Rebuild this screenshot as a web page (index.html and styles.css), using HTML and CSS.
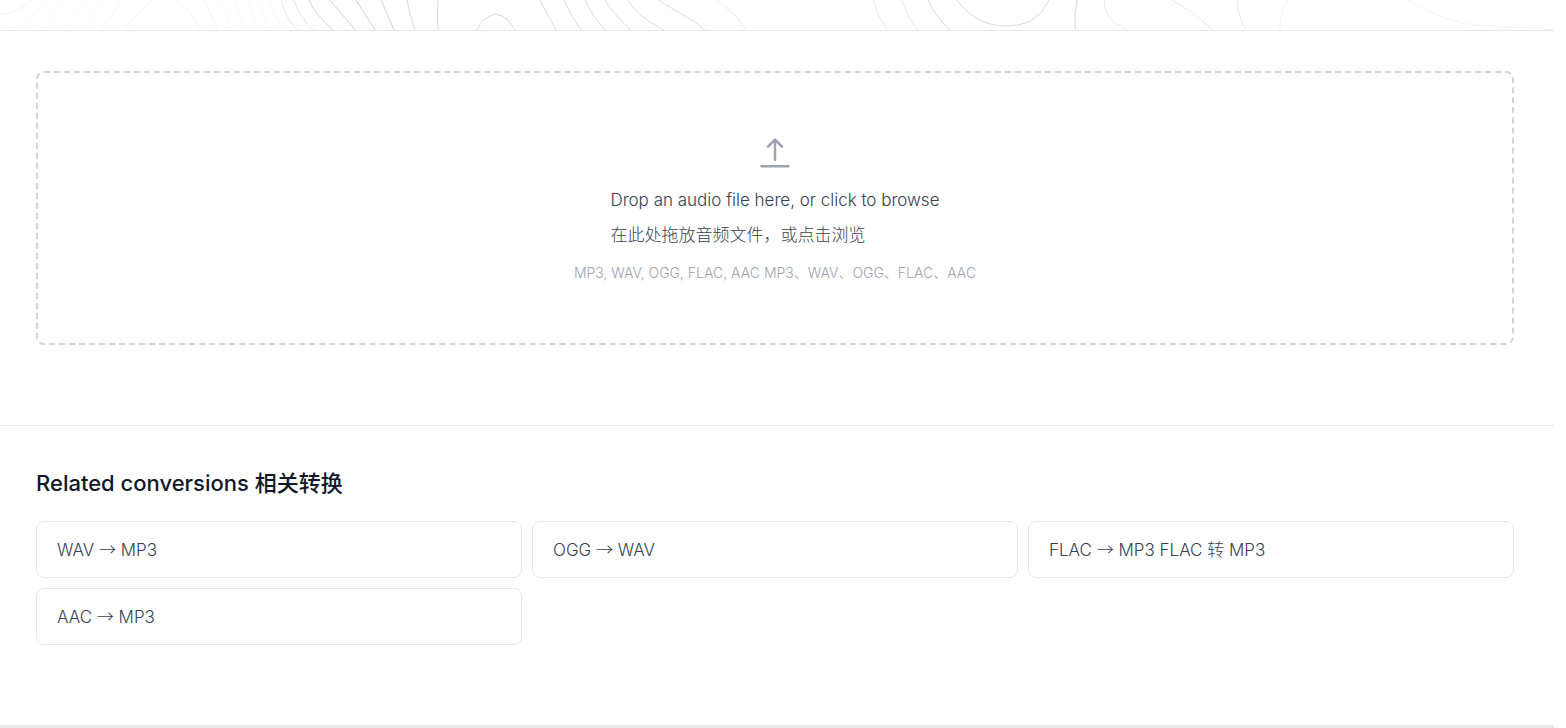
FILE: index.html
```html
<!DOCTYPE html>
<html lang="en">
<head>
<meta charset="utf-8">
<meta name="viewport" content="width=device-width, initial-scale=1">
<title>Audio converter</title>
<link rel="stylesheet" href="styles.css">
</head>
<body>
<div class="page">
  <header class="hero">
    <svg class="contours" viewBox="0 0 1554 30" preserveAspectRatio="none" aria-hidden="true">
      <g stroke="#faf3ea">
        <path d="M0 15Q19 12 32 0M101 30Q113 16 121 0M124 30Q137 11 154 0M175 0Q192 10 200 30M204 0L218 30"/>
      </g>
      <g stroke="#fcf9f4">
        <path d="M12 28Q34 20 46 0M38 30Q54 18 64 0M64 30Q76 17 87 0M82 30L103 0M220 0Q226 20 233 30M234 0Q239 18 246 30M247 0L259 30M257 0Q264 20 273 30M269 0Q276 20 284 30"/>
      </g>
      <g stroke="#e6e4df">
        <path d="M281 0Q286 18 297 30M294 0Q300 18 313 30"/>
      </g>
      <g stroke="#d2d1cd">
        <path d="M309 0Q314 13 333 30M330 0L355 30M356 0L375 30M381 0L394 30"/>
      </g>
      <g stroke="#dcdbd7">
        <path d="M407 0Q409 13 415 30M438 0Q437 14 438 30M477 30L482 21Q489 16 495 14Q502 15 508 20L515 30M540 0L556 30M564 0Q571 17 581 30M585 0Q592 16 605 30M605 0Q612 13 631 30M628 0Q636 16 664 30M659 0C674 11 690 17 705 30"/>
      </g>
      <g stroke="#ebe9e5">
        <path d="M716 0Q737 14 746 30M873 0Q878 17 887 30M902 0Q907 17 918 30"/>
      </g>
      <g stroke="#dcdbd7">
        <path d="M928 0Q934 15 950 30M957 0C970 18 987 26 1007 26Q1018 26 1029 22L1042 12L1049 0M1077 0Q1074 15 1075 30"/>
      </g>
      <g stroke="#ebe9e5">
        <path d="M1104 0Q1104 14 1116 24L1128 30M1171 0Q1189 8 1213 30M1237 0Q1238 16 1246 30"/>
      </g>
      <g stroke="#f7f4ef">
        <path d="M1288 0Q1279 12 1280 30M1407 0Q1448 24 1482 26Q1520 26 1554 30"/>
      </g>
    </svg>
  </header>

  <main>
    <section class="section">
      <label class="dropzone">
        <input class="file-input" type="file" accept="audio/*">
        <svg class="upload-icon" viewBox="0 0 24 24" aria-hidden="true">
          <path d="M3.9 20h16.2M12 16V4M7.8 8.2L12 4l4.2 4.2"/>
        </svg>
        <span class="drop-title">Drop an audio file here, or click to browse<br>在此处拖放音频文件，或点击浏览</span>
        <span class="drop-hint">MP3, WAV, OGG, FLAC, AAC MP3、WAV、OGG、FLAC、AAC</span>
      </label>
    </section>

    <section class="section related">
      <h2 class="heading">Related conversions 相关转换</h2>
      <nav class="cards" aria-label="Related conversions">
        <a class="card" href="#">WAV <span class="arrow">→</span> MP3</a>
        <a class="card" href="#">OGG <span class="arrow">→</span> WAV</a>
        <a class="card" href="#">FLAC <span class="arrow">→</span> MP3 FLAC 转 MP3</a>
        <a class="card" href="#">AAC <span class="arrow">→</span> MP3</a>
      </nav>
    </section>
  </main>
  <footer class="footer"></footer>
</div>
</body>
</html>
```
FILE: styles.css
```css
* { box-sizing: border-box; }

body {
  margin: 0;
  background: #fff;
  color: #374151;
  font-family: Inter, "Noto Sans CJK SC", sans-serif;
  font-size: 17px;
  font-weight: 300;
}

.page { margin-right: 12px; }

.hero {
  border-bottom: 1px solid #e5e7eb;
}

.contours {
  display: block;
  width: 100%;
  height: 30px;
  fill: none;
  stroke-width: 1;
}

.section {
  padding: 40px 40px 80px 36px;
}

.dropzone {
  display: flex;
  flex-direction: column;
  align-items: center;
  gap: 10px;
  padding: 60px 20px;
  border: 2px dashed #d1d5db;
  border-radius: 8px;
  cursor: pointer;
}

.file-input {
  position: absolute;
  width: 1px;
  height: 1px;
  opacity: 0;
}

.upload-icon {
  width: 40px;
  height: 40px;
  fill: none;
  stroke: #9ca3af;
  stroke-width: 1.5;
  stroke-linecap: round;
  stroke-linejoin: round;
}

.drop-title { line-height: 35px; }

.drop-hint {
  color: #9ca3af;
  font-size: 14px;
  line-height: 20px;
}

.related { border-top: 1px solid #e5e7eb; }

.heading {
  margin: 0 0 20px;
  color: #111827;
  font-size: 22px;
  font-weight: 500;
  line-height: 35px;
}

.cards {
  display: grid;
  grid-template-columns: repeat(3, 1fr);
  gap: 10px;
}

.card {
  padding: 10px 20px;
  border: 1px solid #e5e7eb;
  border-radius: 8px;
  color: #374151;
  line-height: 33px;
  text-decoration: none;
}

.arrow { font-family: "Noto Sans CJK SC", sans-serif; }

.footer {
  height: 3px;
  background: #e5e7eb;
}
```
